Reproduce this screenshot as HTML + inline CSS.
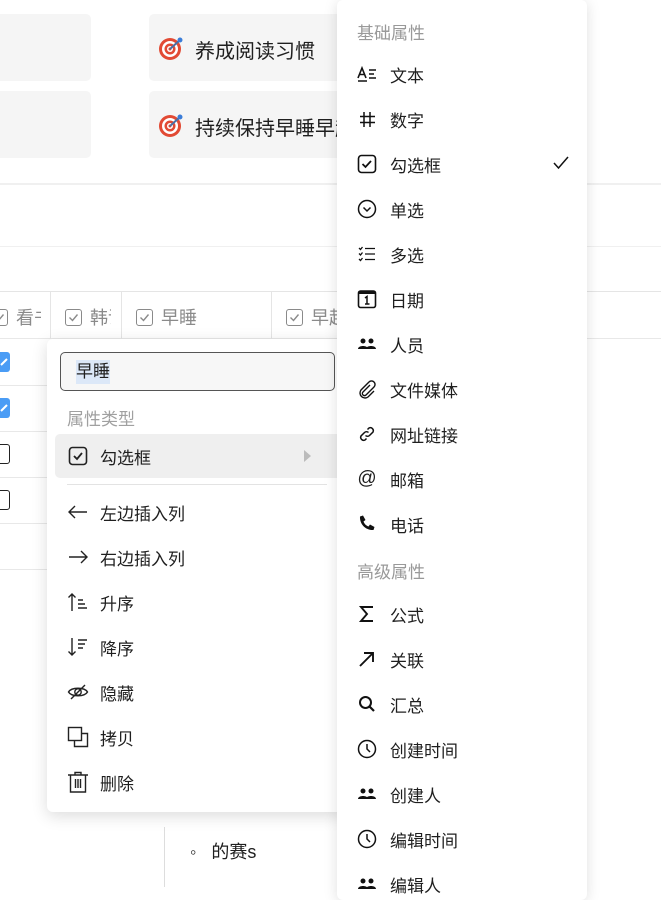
<!DOCTYPE html>
<html><head><meta charset="utf-8">
<style>
*{margin:0;padding:0;box-sizing:border-box}
html,body{width:661px;height:882px;overflow:hidden;background:#fff;font-family:"Liberation Sans","Noto Sans CJK SC",sans-serif;color:#1f1f1f}
.abs{position:absolute}
.card{position:absolute;background:#f5f5f5;border-radius:5px}
.ct{position:absolute;font-size:20px;display:flex;align-items:center;gap:10px;white-space:nowrap}
.hl{position:absolute;left:0;width:661px;height:2px;background:#f0f0f0}
.vl{position:absolute;width:1px;background:#e5e5e5}
.col{position:absolute;top:292px;height:46px;overflow:hidden}
.th{position:absolute;top:12px;font-size:18px;color:#8a8a8a;display:flex;align-items:center;gap:8px;white-space:nowrap}
.cb{flex:0 0 17px;width:17px;height:17px;border:1.5px solid #8a8a8a;border-radius:3px;display:inline-block;position:relative}
.rl{position:absolute;left:0;width:50px;height:1px;background:#e8e8e8}
.menu{position:absolute;left:47px;top:339px;width:300px;height:473px;background:#fff;border-radius:6px;box-shadow:0 4px 16px rgba(0,0,0,.14)}
.mi{position:absolute;left:20px;font-size:17px;display:flex;align-items:center;height:24px}
.mi svg{width:22px;height:22px;margin-right:11px}
.rm{position:absolute;left:337px;top:0;width:250px;height:900px;background:#fff;border-radius:6px;box-shadow:0 2px 14px rgba(0,0,0,.13)}
.ri{position:absolute;left:20px;font-size:17px;display:flex;align-items:center;height:24px;white-space:nowrap}
.ri svg{width:20px;height:20px;margin-right:13px}
.gh{position:absolute;left:20px;font-size:17px;color:#999}
</style></head><body>
<div class="card" style="left:-10px;top:14px;width:101px;height:67px"></div>
<div class="card" style="left:-10px;top:91px;width:101px;height:67px"></div>
<div class="card" style="left:149px;top:14px;width:220px;height:67px"></div>
<div class="card" style="left:149px;top:91px;width:220px;height:67px"></div>
<svg class="abs" style="left:158px;top:35px" width="26" height="26" viewBox="0 0 26 26"><circle cx="12" cy="14" r="11" fill="#e24a34"/><circle cx="12" cy="14" r="8" fill="#fff"/><circle cx="12" cy="14" r="5.5" fill="#e24a34"/><circle cx="12" cy="14" r="3" fill="#fff"/><circle cx="12" cy="14" r="1.5" fill="#e24a34"/><path d="M12 14 L22 5" stroke="#4a6fa5" stroke-width="2"/><circle cx="22" cy="5" r="2.5" fill="#3b7dd8"/></svg>
<div class="ct" style="left:195px;top:35px">养成阅读习惯</div>
<svg class="abs" style="left:158px;top:112px" width="26" height="26" viewBox="0 0 26 26"><circle cx="12" cy="14" r="11" fill="#e24a34"/><circle cx="12" cy="14" r="8" fill="#fff"/><circle cx="12" cy="14" r="5.5" fill="#e24a34"/><circle cx="12" cy="14" r="3" fill="#fff"/><circle cx="12" cy="14" r="1.5" fill="#e24a34"/><path d="M12 14 L22 5" stroke="#4a6fa5" stroke-width="2"/><circle cx="22" cy="5" r="2.5" fill="#3b7dd8"/></svg>
<div class="ct" style="left:195px;top:112px">持续保持早睡早起</div>
<div class="hl" style="top:183px"></div>
<div class="hl" style="top:246px;height:1px"></div>
<div class="abs" style="left:0;top:291px;width:661px;height:1px;background:#e5e5e5"></div>
<div class="abs" style="left:0;top:338px;width:661px;height:1px;background:#e8e8e8"></div>
<div class="vl" style="left:50px;top:291px;height:48px"></div>
<div class="vl" style="left:121px;top:291px;height:48px"></div>
<div class="vl" style="left:271px;top:291px;height:48px"></div>
<div class="col" style="left:0;width:41px"><div class="th" style="left:-9px"><span class="cb"><svg class="abs" style="left:2px;top:2px" width="11" height="11"><path d="M1.5 5.5l3 3 5-6" stroke="#8a8a8a" stroke-width="1.4" fill="none"/></svg></span>看书</div></div>
<div class="col" style="left:51px;width:60px"><div class="th" style="left:14px"><span class="cb"><svg class="abs" style="left:2px;top:2px" width="11" height="11"><path d="M1.5 5.5l3 3 5-6" stroke="#8a8a8a" stroke-width="1.4" fill="none"/></svg></span>韩语</div></div>
<div class="col" style="left:122px;width:149px"><div class="th" style="left:14px"><span class="cb"><svg class="abs" style="left:2px;top:2px" width="11" height="11"><path d="M1.5 5.5l3 3 5-6" stroke="#8a8a8a" stroke-width="1.4" fill="none"/></svg></span>早睡</div></div>
<div class="col" style="left:272px;width:120px"><div class="th" style="left:14px"><span class="cb"><svg class="abs" style="left:2px;top:2px" width="11" height="11"><path d="M1.5 5.5l3 3 5-6" stroke="#8a8a8a" stroke-width="1.4" fill="none"/></svg></span>早起</div></div>
<div class="rl" style="top:385px"></div><div class="rl" style="top:431px"></div><div class="rl" style="top:477px"></div><div class="rl" style="top:523px"></div><div class="rl" style="top:569px"></div>
<div class="abs" style="left:-8px;top:352px;width:18px;height:20px;background:#4a9cf5;border-radius:3px"><svg width="18" height="20"><path d="M9 13l6-6" stroke="#fff" stroke-width="2"/></svg></div>
<div class="abs" style="left:-8px;top:398px;width:18px;height:20px;background:#4a9cf5;border-radius:3px"><svg width="18" height="20"><path d="M9 13l6-6" stroke="#fff" stroke-width="2"/></svg></div>
<div class="abs" style="left:-8px;top:444px;width:18px;height:20px;border:1.5px solid #222;border-radius:3px"></div>
<div class="abs" style="left:-8px;top:490px;width:18px;height:20px;border:1.5px solid #222;border-radius:3px"></div>
<div class="abs" style="left:164px;top:827px;width:1px;height:60px;background:#ddd"></div>
<div class="abs" style="left:190px;top:838px;font-size:18px">◦&nbsp;&nbsp;&nbsp;的赛s</div>

<div class="menu">
 <div class="abs" style="left:13px;top:13px;width:275px;height:39px;border:1px solid #555;border-radius:5px;background:#f7f7f7"></div>
 <div class="abs" style="left:29px;top:21px;font-size:17px;background:#dce8f8;line-height:24px">早睡</div>
 <div class="abs" style="left:20px;top:66px;font-size:17px;color:#a0a0a0">属性类型</div>
 <div class="abs" style="left:8px;top:95px;width:300px;height:44px;background:#efefef;border-radius:5px"></div>
 <div class="mi" style="top:105px"><svg viewBox="0 0 22 22"><rect x="2.5" y="2.5" width="17" height="17" rx="3" fill="none" stroke="#222" stroke-width="1.6"/><path d="M7 11l3 3 5-6" fill="none" stroke="#222" stroke-width="1.8"/></svg>勾选框</div>
 <svg class="abs" style="left:257px;top:111px" width="8" height="12"><path d="M0 0l7 6-7 6z" fill="#bbb"/></svg>
 <div class="abs" style="left:20px;top:145px;width:260px;height:1px;background:#e3e3e3"></div>
 <div class="mi" style="top:161px"><svg viewBox="0 0 22 22"><path d="M20 11H2M8 5l-6 6 6 6" fill="none" stroke="#222" stroke-width="1.4"/></svg>左边插入列</div>
 <div class="mi" style="top:206px"><svg viewBox="0 0 22 22"><path d="M2 11h18M14 5l6 6-6 6" fill="none" stroke="#222" stroke-width="1.4"/></svg>右边插入列</div>
 <div class="mi" style="top:251px"><svg viewBox="0 0 22 22"><path d="M5 20V3M1.5 6.5L5 3l3.5 3.5M11 9h5M11 13h7M11 17h9" fill="none" stroke="#222" stroke-width="1.4"/></svg>升序</div>
 <div class="mi" style="top:296px"><svg viewBox="0 0 22 22"><path d="M5 2v17M1.5 15.5L5 19l3.5-3.5M11 4h9M11 8h7M11 12h5" fill="none" stroke="#222" stroke-width="1.4"/></svg>降序</div>
 <div class="mi" style="top:341px"><svg viewBox="0 0 22 22"><path d="M1.5 11c3-5 16-5 19 0-3 5-16 5-19 0z" fill="none" stroke="#222" stroke-width="1.4"/><circle cx="11" cy="11" r="3.2" fill="none" stroke="#222" stroke-width="1.4"/><path d="M4 18L18 4" stroke="#222" stroke-width="1.4"/></svg>隐藏</div>
 <div class="mi" style="top:386px"><svg viewBox="0 0 22 22"><rect x="1.5" y="1.5" width="13" height="13" fill="none" stroke="#222" stroke-width="1.4"/><path d="M14.5 7.5h6v13h-13v-6" fill="none" stroke="#222" stroke-width="1.4"/></svg>拷贝</div>
 <div class="mi" style="top:431px"><svg viewBox="0 0 22 22"><path d="M1 4h20M8 4V1.5h6V4M3.5 4v17h15V4M8.5 8v9M11 8v9M13.5 8v9" fill="none" stroke="#222" stroke-width="1.4"/></svg>删除</div>
</div>

<div class="rm">
 <div class="gh" style="top:19px">基础属性</div>
 <div class="ri" style="top:62px"><svg viewBox="0 0 20 20"><path d="M1 14L5 4l4 10M2.5 10.5h5M1 17h9M12 6h7M12 10h5M12 14h7" fill="none" stroke="#111" stroke-width="1.6"/></svg>文本</div>
 <div class="ri" style="top:107px"><svg viewBox="0 0 20 20"><path d="M7 3v15M13 3v15M3 7.5h15M3 13.5h15" fill="none" stroke="#111" stroke-width="1.5"/></svg>数字</div>
 <div class="ri" style="top:152px"><svg viewBox="0 0 20 20"><rect x="1.5" y="1.5" width="17" height="17" rx="3" fill="none" stroke="#111" stroke-width="1.6"/><path d="M5.5 10l3 3 5.5-6" fill="none" stroke="#111" stroke-width="1.8"/></svg>勾选框</div>
 <svg class="abs" style="left:216px;top:156px" width="16" height="14"><path d="M1 7l4.5 5L15 1" fill="none" stroke="#111" stroke-width="1.5"/></svg>
 <div class="ri" style="top:197px"><svg viewBox="0 0 20 20"><circle cx="10" cy="10" r="8.5" fill="none" stroke="#111" stroke-width="1.5"/><path d="M6.5 8.5L10 12l3.5-3.5" fill="none" stroke="#111" stroke-width="1.5"/></svg>单选</div>
 <div class="ri" style="top:242px"><svg viewBox="0 0 20 20"><path d="M8 4.5h10M8 10h10M8 15.5h10M2 4l1.5 1.5L5.5 3M2 9.5l1.5 1.5L5.5 8.5M2 15l1.5 1.5 2-2.5" fill="none" stroke="#111" stroke-width="1.3"/></svg>多选</div>
 <div class="ri" style="top:287px"><svg viewBox="0 0 20 20"><rect x="1.5" y="2" width="17" height="16.5" rx="2" fill="none" stroke="#111" stroke-width="1.6"/><rect x="1.5" y="2" width="17" height="3" fill="#111"/><path d="M8 9l2-1.5V15M8 15h4.5" fill="none" stroke="#111" stroke-width="1.5"/></svg>日期</div>
 <div class="ri" style="top:332px"><svg viewBox="0 0 20 20"><circle cx="6" cy="7" r="2.5" fill="#111"/><circle cx="14" cy="7" r="2.5" fill="#111"/><path d="M1 15c0-4 10-4 10 0zM9 15c0-4 10-4 10 0z" fill="#111"/></svg>人员</div>
 <div class="ri" style="top:377px"><svg viewBox="0 0 20 20"><path d="M13 6l-7 7a2 2 0 0 0 3 3l8-8a3.5 3.5 0 0 0-5-5l-8 8a5 5 0 0 0 7 7l6-6" fill="none" stroke="#111" stroke-width="1.4"/></svg>文件媒体</div>
 <div class="ri" style="top:422px"><svg viewBox="0 0 20 20"><path d="M8.5 11.5a3 3 0 0 0 4 0l3.5-3.5a3 3 0 0 0-4-4l-1.5 1.5M11.5 8.5a3 3 0 0 0-4 0L4 12a3 3 0 0 0 4 4l1.5-1.5" fill="none" stroke="#111" stroke-width="1.5"/></svg>网址链接</div>
 <div class="ri" style="top:467px"><span style="width:20px;margin-right:13px;font-size:19px;text-align:center">@</span>邮箱</div>
 <div class="ri" style="top:512px"><svg viewBox="0 0 20 20"><path d="M3 2.5l3-1 2.5 4.5-2 1.5c1 2.5 2.5 4 5 5l1.5-2 4.5 2.5-1 3c-8 .5-14-6-13.5-13.5z" fill="#111"/></svg>电话</div>
 <div class="gh" style="top:558px">高级属性</div>
 <div class="ri" style="top:602px"><svg viewBox="0 0 20 20"><path d="M16 3H4l6 7-6 7h12" fill="none" stroke="#111" stroke-width="1.9"/></svg>公式</div>
 <div class="ri" style="top:647px"><svg viewBox="0 0 20 20"><path d="M3 17L16 4M7 4h9v9" fill="none" stroke="#111" stroke-width="1.9"/></svg>关联</div>
 <div class="ri" style="top:692px"><svg viewBox="0 0 20 20"><circle cx="8.5" cy="8.5" r="5.5" fill="none" stroke="#111" stroke-width="2"/><path d="M12.5 12.5L17 17" stroke="#111" stroke-width="2.2"/></svg>汇总</div>
 <div class="ri" style="top:737px"><svg viewBox="0 0 20 20"><circle cx="10" cy="10" r="8.5" fill="none" stroke="#111" stroke-width="1.5"/><path d="M10 5v5l3 3" fill="none" stroke="#111" stroke-width="1.5"/></svg>创建时间</div>
 <div class="ri" style="top:782px"><svg viewBox="0 0 20 20"><circle cx="6" cy="7" r="2.5" fill="#111"/><circle cx="14" cy="7" r="2.5" fill="#111"/><path d="M1 15c0-4 10-4 10 0zM9 15c0-4 10-4 10 0z" fill="#111"/></svg>创建人</div>
 <div class="ri" style="top:827px"><svg viewBox="0 0 20 20"><circle cx="10" cy="10" r="8.5" fill="none" stroke="#111" stroke-width="1.5"/><path d="M10 5v5l3 3" fill="none" stroke="#111" stroke-width="1.5"/></svg>编辑时间</div>
 <div class="ri" style="top:872px"><svg viewBox="0 0 20 20"><circle cx="6" cy="7" r="2.5" fill="#111"/><circle cx="14" cy="7" r="2.5" fill="#111"/><path d="M1 15c0-4 10-4 10 0zM9 15c0-4 10-4 10 0z" fill="#111"/></svg>编辑人</div>
</div>
</body></html>
